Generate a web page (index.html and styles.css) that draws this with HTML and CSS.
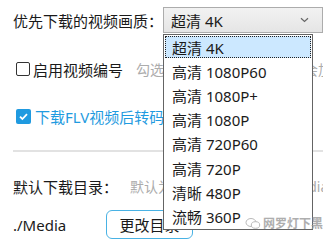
FILE: index.html
```html
<!DOCTYPE html>
<html lang="zh-CN">
<head>
    <meta charset="UTF-8">
    <title>下载设置</title>
    <link rel="stylesheet" href="styles.css">
</head>
<body>
    <div class="settings">
        <div class="row row-quality">
            <span class="label">优先下载的视频画质：</span>
            <div class="select">
                <span>超清 4K</span>
                <svg class="chevron" width="9" height="6" viewBox="0 0 9 6"><path d="M1 1.2 L4.5 4.5 L8 1.2" fill="none" stroke="#666" stroke-width="1.2"/></svg>
            </div>
        </div>

        <div class="row row-check">
            <span class="checkbox"></span>
            <span class="check-text">启用视频编号</span>
            <span class="hint">勾选后下载的视频文件名前会加上编号</span>
        </div>

        <div class="row row-check">
            <span class="checkbox checked">
                <svg width="11" height="11" viewBox="0 0 11 11"><path d="M2 5.6 L4.4 8 L9 3.2" fill="none" stroke="#fff" stroke-width="1.8"/></svg>
            </span>
            <span class="check-text on">下载FLV视频后转码为MP4格式</span>
        </div>

        <div class="divider"></div>

        <div class="row row-dir">
            <span class="label">默认下载目录：</span>
            <span class="hint">默认为程序所在目录下的 Media 文件夹中</span>
        </div>

        <div class="row row-path">
            <span class="path">./Media</span>
            <button class="btn">更改目录</button>
        </div>
    </div>

    <ul class="dropdown">
        <li class="active"><span>超清 4K</span></li>
        <li><span>高清 1080P60</span></li>
        <li><span>高清 1080P+</span></li>
        <li><span>高清 1080P</span></li>
        <li><span>高清 720P60</span></li>
        <li><span>高清 720P</span></li>
        <li><span>清晰 480P</span></li>
        <li><span>流畅 360P</span></li>
    </ul>

    <div class="watermark">
        <svg width="16" height="13" viewBox="0 0 16 13"><ellipse cx="6" cy="5.5" rx="5" ry="4" fill="none" stroke="#aaa" stroke-width="1"/><ellipse cx="10.5" cy="8" rx="4.2" ry="3.3" fill="#fff" stroke="#aaa" stroke-width="1"/></svg>
        <span>网罗灯下黑</span>
    </div>
</body>
</html>
```

FILE: styles.css
```css
/* 基础 */
body {
    margin: 0;
    width: 323px;
    height: 246px;
    overflow: hidden;
    background: #fff;
    color: #1a1a1a;
    font-family: 'Segoe UI', 'Noto Sans', 'Noto Sans CJK SC', sans-serif;
    font-size: 15px;
    position: relative;
}

.settings {
    padding: 7px 0 0 13px;
    overflow: hidden;
}

.row {
    display: flex;
    align-items: center;
    white-space: nowrap;
}

/* 画质选择 */
.row-quality {
    height: 26px;
}
.row-quality .label {
    width: 150px;
    flex-shrink: 0;
}
.select {
    box-sizing: border-box;
    flex-shrink: 0;
    width: 160px;
    height: 26px;
    border: 1px solid #acacac;
    background: linear-gradient(#f2f2f2, #e5e5e5);
    display: flex;
    align-items: center;
    justify-content: space-between;
    padding: 0 13px 0 7px;
}

/* 复选框 */
.row-check {
    height: 22px;
    margin-top: 25px;
}
.checkbox {
    box-sizing: border-box;
    flex-shrink: 0;
    width: 14px;
    height: 14px;
    margin-left: 3px;
    margin-right: 3px;
    border: 1.5px solid #333;
    border-radius: 2px;
    display: flex;
    align-items: center;
    justify-content: center;
}
.checkbox.checked {
    width: 15px;
    height: 15px;
    border: none;
    background: #1f9ae0;
    margin-right: 4px;
}
.check-text {
    flex-shrink: 0;
}
.check-text.on {
    color: #1f9be0;
}
.hint {
    color: #acacac;
    font-size: 14px;
    margin-left: 13px;
}

.divider {
    height: 2px;
    background: #e2e2e2;
    margin-top: 23px;
}

/* 下载目录 */
.row-dir {
    height: 22px;
    margin-top: 23px;
}
.row-dir .label {
    flex-shrink: 0;
}
.row-dir .hint {
    margin-left: 12px;
}
.row-path {
    margin-top: 13px;
    height: 29px;
}
.path {
    width: 93px;
}
.btn {
    box-sizing: border-box;
    width: 87px;
    height: 29px;
    border: 1.5px solid #49b2e4;
    border-radius: 6px;
    background: #fff;
    font: inherit;
    color: #1a1a1a;
    padding: 0;
}

/* 下拉列表 */
.dropdown {
    position: absolute;
    left: 163px;
    top: 34px;
    width: 150px;
    margin: 0;
    padding: 0;
    list-style: none;
    box-sizing: border-box;
    border: 1px solid #646464;
    background: #fff;
}
.dropdown li {
    height: 24.2px;
    padding: 1px;
    box-sizing: border-box;
}
.dropdown li span {
    box-sizing: border-box;
    display: flex;
    align-items: center;
    height: 100%;
    padding-left: 6px;
    border: 1px dotted transparent;
}
.dropdown li.active span {
    background: #cce8ff;
    border-color: #222;
}

.watermark {
    position: absolute;
    right: 0;
    top: 214px;
    display: flex;
    align-items: center;
    gap: 2px;
    color: #9a9a9a;
    font-size: 12px;
    font-weight: bold;
    opacity: 0.8;
}
```
